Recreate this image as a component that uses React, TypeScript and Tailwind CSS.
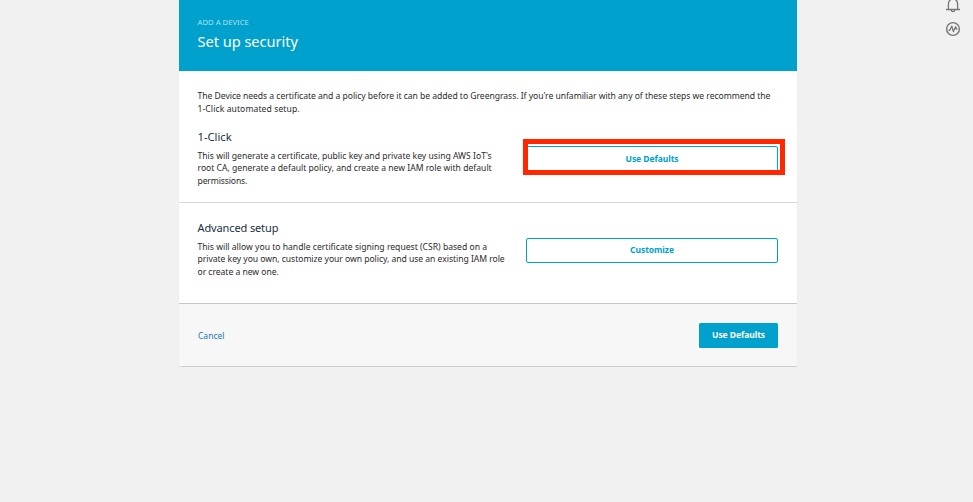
type Line = { text: string; className?: string };

function Lines({ lines }: { lines: Line[] }) {
  return (
    <p className="text-[8.6px] leading-[12.6px] text-[#2b2b2b]">
      {lines.map((line) => (
        <span key={line.text} className={`block whitespace-nowrap ${line.className ?? ""}`}>{line.text}</span>
      ))}
    </p>
  );
}

function BellIcon() {
  return (
    <svg className="block h-[15px] w-[16px]" viewBox="0 0 16 15" fill="none" stroke="#777" strokeWidth="1.3">
      <path d="M1 11.5h14M3.4 11.2V6.2C3.4 3 5.2 1 8 1s4.6 2 4.6 5.2v5M6.2 12c0 2.2 3.6 2.2 3.6 0" />
    </svg>
  );
}

function PulseIcon() {
  return (
    <svg className="block h-[16px] w-[16px]" viewBox="0 0 16 16" fill="none" stroke="#777" strokeWidth="1.4">
      <circle cx="8" cy="8" r="6.4" />
      <path d="M3.4 9.4h1.2l2.2-4.2 1.6 5.4 2.2-4.8 1.6 3" strokeWidth="1.3" strokeLinejoin="round" />
    </svg>
  );
}

export default function App() {
  return (
    <div className="relative h-[502px] w-[973px] overflow-hidden bg-[#f1f1f1] font-['Noto_Sans','Open_Sans',sans-serif]">
      <main className="ml-[179px] flex h-[366px] w-[618px] flex-col bg-white shadow-[0_0.5px_1px_rgba(0,0,0,0.15)]">
        <header className="h-[70.5px] shrink-0 bg-[#00a1cc] pl-[18.5px] pt-[16px]">
          <div className="text-[7.7px] leading-[12px] text-[#a6e2f3]">ADD A DEVICE</div>
          <h1 className="mt-[3px] text-[14.6px] leading-[20px] tracking-[-0.03px] text-white">Set up security</h1>
        </header>
        <section className="flex h-[132px] shrink-0 flex-col border-b border-[#d5d9d9] pl-[18.5px] pr-[19px] pt-[19.5px]">
          <Lines
            lines={[
              {
                text: "The Device needs a certificate and a policy before it can be added to Greengrass. If you're unfamiliar with any of these steps we recommend the",
                className: "tracking-[-0.04px]",
              },
              { text: "1-Click automated setup.", className: "tracking-[0.08px]" },
            ]}
          />
          <div className="mt-[14px] flex justify-between">
            <div>
              <h2 className="mb-[4.5px] text-[11.2px] leading-[16px] text-[#16303f]">1-Click</h2>
              <Lines
                lines={[
                  { text: "This will generate a certificate, public key and private key using AWS IoT's" },
                  { text: "root CA, generate a default policy, and create a new IAM role with default" },
                  { text: "permissions.", className: "tracking-[-0.13px]" },
                ]}
              />
            </div>
            <div className="relative mt-[17px] h-[26px] w-[252px]">
              <button className="block h-[26px] w-[252px] rounded-[2px] border border-[#00a1cc] text-[8.5px] font-bold tracking-[-0.06px] text-[#00a1cc]">
                Use Defaults
              </button>
              <div className="absolute -left-[3px] -top-[7px] h-[36px] w-[262px] border-[5px] border-[#ff2600]" />
            </div>
          </div>
        </section>
        <section className="flex h-[100.5px] shrink-0 justify-between pl-[18.5px] pr-[19px] pt-[17.5px]">
          <div>
            <h2 className="mb-[4.5px] text-[11px] leading-[16px] tracking-[-0.12px] text-[#16303f]">Advanced setup</h2>
            <Lines
              lines={[
                { text: "This will allow you to handle certificate signing request (CSR) based on a" },
                { text: "private key you own, customize your own policy, and use an existing IAM role", className: "tracking-[-0.04px]" },
                { text: "or create a new one.", className: "tracking-[-0.04px]" },
              ]}
            />
          </div>
          <button className="mt-[17.5px] h-[25px] w-[252px] rounded-[2px] border border-[#00a1cc] pt-[1px] text-[8.5px] font-bold tracking-[-0.06px] text-[#00a1cc]">
            Customize
          </button>
        </section>
        <footer className="flex grow items-center justify-between border-t border-[#c5c8c8] bg-[#f7f7f7] pl-[19px] pr-[19px]">
          <a className="pt-[2px] text-[8.5px] text-[#1b75bc]">Cancel</a>
          <button className="h-[25px] w-[79px] rounded-[1.5px] bg-[#00a1cc] pt-[1px] text-[8.5px] font-bold tracking-[-0.06px] text-white">Use Defaults</button>
        </footer>
      </main>
      <aside className="absolute right-[12px] top-[-2px] flex flex-col gap-[8px]">
        <BellIcon />
        <PulseIcon />
      </aside>
    </div>
  );
}
